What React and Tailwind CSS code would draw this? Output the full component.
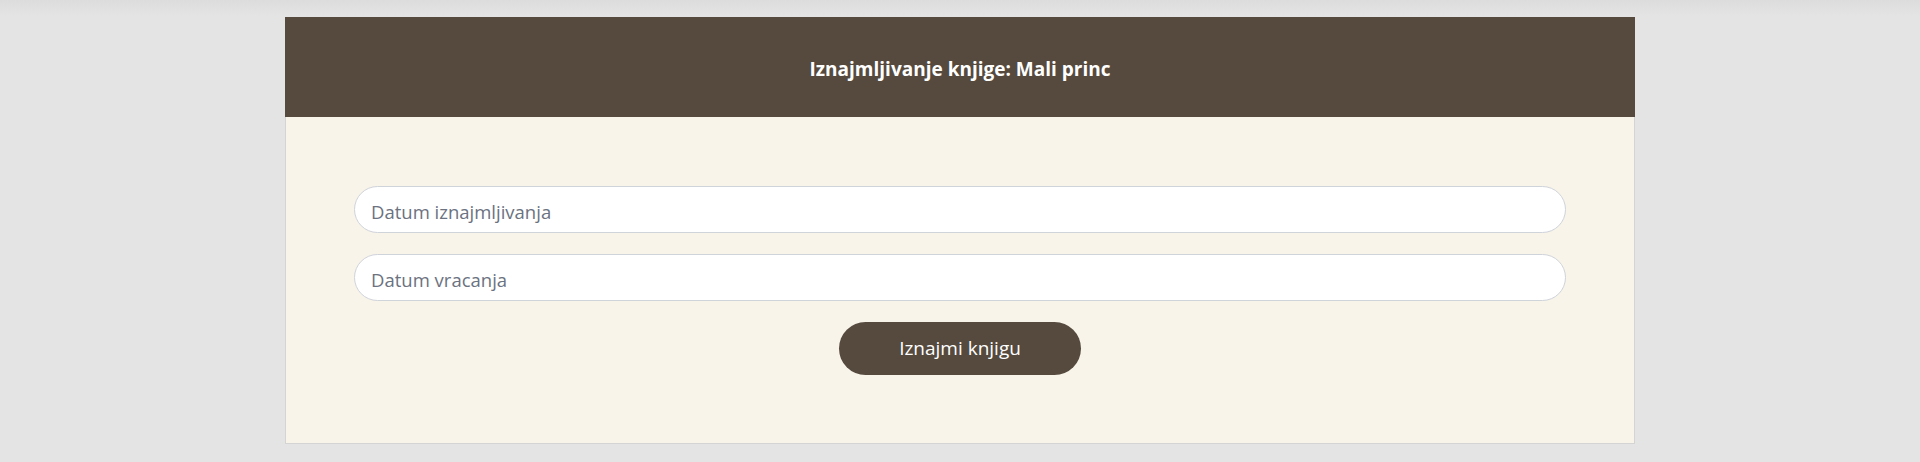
import React, { useState } from 'react';

const App = () => {
  const [from, setFrom] = useState('');
  const [to, setTo] = useState('');

  return (
    <div
      className="min-h-[462px] w-full bg-[#e4e4e4] bg-gradient-to-b from-[#dcdcdc] to-[#e4e4e4] to-[16px] pt-[17px]"
      style={{ fontFamily: '"Open Sans", "Noto Sans", sans-serif' }}
    >
      <div className="mx-auto w-[1350px]">
        {/* Header */}
        <div className="h-[100px] bg-[#564a3e] flex items-center justify-center pt-[4px]">
          <h2 className="text-[19px] font-bold text-white">Iznajmljivanje knjige: Mali princ</h2>
        </div>

        {/* Form */}
        <div className="bg-[#f8f4ea] border border-t-0 border-[#d4d4d4] px-[68px] pt-[69px] pb-[68px] flex flex-col items-center gap-[21px]">
          <input
            type="text"
            value={from}
            onChange={(e) => setFrom(e.target.value)}
            placeholder="Datum iznajmljivanja"
            className="w-full h-[47px] rounded-full bg-white border border-[#cfd3da] px-[16px] pt-[3px] text-[18.5px] text-[#374151] placeholder:text-[#6b7280] outline-none"
          />
          <input
            type="text"
            value={to}
            onChange={(e) => setTo(e.target.value)}
            placeholder="Datum vracanja"
            className="w-full h-[47px] rounded-full bg-white border border-[#cfd3da] px-[16px] pt-[3px] text-[18.5px] text-[#374151] placeholder:text-[#6b7280] outline-none"
          />
          <button className="w-[242px] h-[53px] rounded-full bg-[#564a3e] text-white text-[19px]">
            Iznajmi knjigu
          </button>
        </div>
      </div>
    </div>
  );
};

export default App;
